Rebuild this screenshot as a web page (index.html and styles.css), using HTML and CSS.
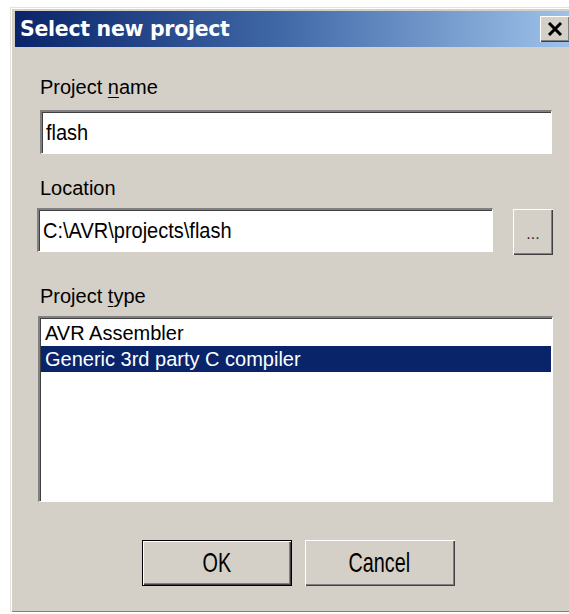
FILE: index.html
```html
<!DOCTYPE html>
<html>
<head>
<meta charset="utf-8">
<title>Select new project</title>
<link rel="stylesheet" href="styles.css">
</head>
<body>
<div class="window">
  <div class="titlebar">
    <span class="title">Select new project</span>
    <button class="close" type="button" aria-label="Close">
      <svg width="16" height="14" viewBox="0 0 16 14"><path d="M2 1 L14 13 M14 1 L2 13" stroke="#000" stroke-width="3"/></svg>
    </button>
  </div>
  <div class="content">
    <div class="label">Project <u>n</u>ame</div>
    <div class="field field-name"><span>flash</span></div>

    <div class="label label-location">Location</div>
    <div class="row">
      <div class="field field-location"><span>C:\AVR\projects\flash</span></div>
      <button class="btn browse" type="button"><span>...</span></button>
    </div>

    <div class="label label-type">Project <u>t</u>ype</div>
    <div class="listbox">
      <div class="item">AVR Assembler</div>
      <div class="item selected">Generic 3rd party C compiler</div>
    </div>

    <div class="actions">
      <button class="btn default" type="button"><span class="cap">OK</span></button>
      <button class="btn" type="button"><span class="cap">Cancel</span></button>
    </div>
  </div>
</div>
</body>
</html>
```

FILE: styles.css
```css
html, body {
  margin: 0;
  padding: 0;
  background: #ffffff;
  overflow: hidden;
}

body {
  width: 569px;
  height: 614px;
  font-family: "Liberation Sans", Arial, sans-serif;
  color: #000;
}

.window {
  box-sizing: border-box;
  margin: 7px 0 0 10px;
  width: 566px;
  height: 605px;
  background: #d4d0c8;
  border-top: 1px solid #e4e2dc;
  border-left: 1px solid #e4e2dc;
  box-shadow: inset 1px 1px 0 #ffffff, inset -1px -1px 0 #808080;
  padding: 3px 0 0 4px;
  display: flex;
  flex-direction: column;
}

.titlebar {
  height: 36px;
  background: linear-gradient(to right, #0a246a 0%, #3f67a6 45%, #a6caf0 100%);
  display: flex;
  align-items: center;
  padding-left: 5px;
  margin-right: -20px;
}

.title {
  font-family: "DejaVu Sans", Verdana, sans-serif;
  font-weight: bold;
  font-size: 20.5px;
  letter-spacing: -0.3px;
  color: #ffffff;
  flex: 1;
}

.close {
  box-sizing: border-box;
  width: 30px;
  height: 26px;
  margin-right: 26px;
  padding: 0;
  background: #d4d0c8;
  border: none;
  box-shadow: inset 1px 1px 0 #ffffff, inset -1px -1px 0 #404040, inset -2px -2px 0 #808080;
  display: flex;
  align-items: center;
  justify-content: center;
}

.content {
  display: flex;
  flex-direction: column;
  padding: 0 0 0 25px;
  width: 516px;
}

.label {
  font-size: 20px;
  line-height: 24px;
  margin-top: 28px;
  height: 24px;
}

.label u {
  text-decoration-thickness: 1px;
  text-underline-offset: 3px;
}

.field {
  box-sizing: border-box;
  height: 44px;
  background: #ffffff;
  border-top: 2px solid #808080;
  border-left: 2px solid #808080;
  border-right: 1px solid #ffffff;
  border-bottom: 1px solid #ffffff;
  box-shadow: inset 1px 1px 0 #404040;
  outline: 1px solid #d4d0c8;
  display: flex;
  align-items: center;
  padding-left: 4px;
  font-size: 20px;
}

.field span {
  display: inline-block;
  transform: scaleY(1.1);
}

.field-name {
  margin-top: 11px;
  width: 512px;
}

.label-location {
  margin-top: 22px;
}

.row {
  display: flex;
  margin-top: 8px;
  margin-left: -3px;
}

.field-location {
  width: 456px;
}

.btn {
  box-sizing: border-box;
  background: #d4d0c8;
  border: none;
  padding: 0;
  font-family: "Liberation Sans", Arial, sans-serif;
  color: #000;
  box-shadow: inset 1px 1px 0 #ffffff, inset -1px -1px 0 #404040, inset -2px -2px 0 #808080;
  display: flex;
  align-items: center;
  justify-content: center;
}

.browse {
  width: 40px;
  height: 46px;
  margin-left: 20px;
  margin-top: 1px;
  font-size: 16px;
  color: #303030;
}

.browse span {
  transform: translateY(2px);
}

.label-type {
  margin-top: 29px;
}

.listbox {
  box-sizing: border-box;
  margin-top: 8px;
  margin-left: -2px;
  width: 515px;
  height: 186px;
  background: #ffffff;
  border-top: 2px solid #808080;
  border-left: 2px solid #808080;
  border-right: 1px solid #ffffff;
  border-bottom: 1px solid #ffffff;
  box-shadow: inset 1px 1px 0 #404040;
  outline: 1px solid #d4d0c8;
  padding: 2px 1px 0 1px;
}

.item {
  height: 26px;
  line-height: 26px;
  font-size: 20px;
  padding-left: 4px;
  white-space: nowrap;
}

.item.selected {
  background: #0a246a;
  color: #ffffff;
}

.actions {
  display: flex;
  justify-content: center;
  gap: 13px;
  margin-top: 38px;
  margin-left: 0;
}

.actions .btn {
  width: 150px;
  height: 46px;
  font-size: 22px;
}

.actions .btn.default {
  border: 1px solid #000;
}

.cap {
  display: inline-block;
  transform: scale(0.9, 1.25);
}
```
